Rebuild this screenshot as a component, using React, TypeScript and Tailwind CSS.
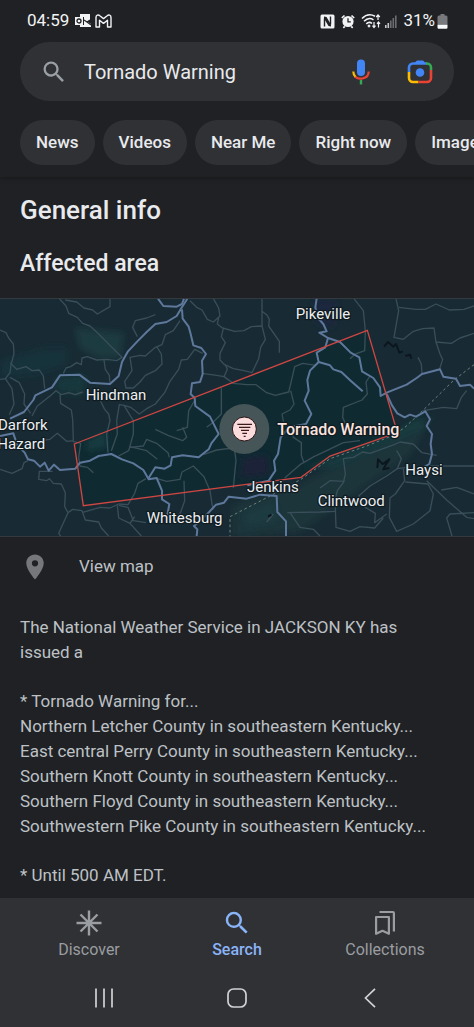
import { MdLocationOn, MdSearch } from 'react-icons/md'

const chips = ['News', 'Videos', 'Near Me', 'Right now', 'Images']

const counties = [
  'Northern Letcher County in southeastern Kentucky...',
  'East central Perry County in southeastern Kentucky...',
  'Southern Knott County in southeastern Kentucky...',
  'Southern Floyd County in southeastern Kentucky...',
  'Southwestern Pike County in southeastern Kentucky...',
]

const places = [
  { name: 'Pikeville', x: 887, y: 75 },
  { name: 'Hindman', x: 257, y: 319 },
  { name: 'Darfork', x: -6, y: 407 },
  { name: 'Hazard', x: -8, y: 466 },
  { name: 'Jenkins', x: 741, y: 595 },
  { name: 'Whitesburg', x: 440, y: 688 },
  { name: 'Clintwood', x: 953, y: 635 },
  { name: 'Haysi', x: 1216, y: 542 },
]

const minorRoads = [
  'M178 14 198 36 206 58 232 70 248 88 270 96 300 124 340 164 366 190 350 200 320 196 290 198 262 188 246 192 244 212 230 206 212 218 198 222 190 238',
  'M196 18 230 24 252 42 278 48 292 60 330 38V14',
  'M0 108 18 116 26 132 40 150 42 178 34 210 50 226 78 218 96 230 118 228 130 246 134 284',
  'M34 204 30 236 16 254 0 256M16 254 36 284 42 330 28 362',
  'M30 250 58 266 74 300 72 330 92 358',
  'M312 198 316 226 328 244 330 270M300 318 314 346 326 360 330 380 320 420 324 476',
  'M466 62 440 72 406 80 398 100 412 128',
  'M540 80 520 110 496 122 486 152 466 160 436 186 420 184 390 190 396 230 374 262 378 282 400 282 420 264 436 244 466 230 486 210 484 180 470 158',
  'M608 178 584 166 562 196 544 198 536 226 510 262 494 296 466 330 440 344 418 360 392 340 372 334 358 332 350 380 352 420 334 470',
  'M372 334 400 380 400 420 386 470 356 486',
  'M96 366 112 336 150 306 168 290 184 302 206 296 226 302 248 294M180 302 182 328 214 348 218 376',
  'M218 376 220 440 200 442 172 418 150 436 122 440M218 442 242 448 236 490 240 516 262 520 280 536',
  'M0 526 36 538 66 524 72 506 84 500M158 532 118 532 116 556 140 560 148 554 160 568 184 570 196 596 194 638 204 656 176 718 182 726',
  'M204 656 218 646 246 650 256 678 296 684 304 702 326 726M246 656 300 640 330 642 356 630 384 632 404 598 414 568 438 554',
  'M352 634 356 672 390 688 424 726M356 634 384 640 400 680 438 686M390 688 404 668',
  'M570 20 590 40 606 48 622 76 640 84 660 66 656 42 640 14M656 70 652 90 670 104 664 128 676 146 660 178 660 198 674 212 700 224 732 230 756 236 776 194 782 160 796 136 786 96 754 98 732 110 704 112 668 102',
  'M786 14 786 96M784 50 800 62 808 76 806 96 838 142 838 176',
  'M606 238 650 244 672 248 682 226 676 212M672 248 700 268 740 272 768 272 800 296 826 304 866 294 872 270 884 218 908 208 948 214',
  'M872 290 882 330 870 348 846 360 852 392 874 402 880 430 904 446 904 484 912 506',
  'M664 282V360L636 388 620 400M586 316 566 350 562 400 530 410',
  'M548 400 560 430 548 440 504 424 466 406M390 460 430 456 440 436 470 448 504 476 508 490',
  'M390 458 440 470 472 496M700 462 650 468 610 482M704 470 708 500 702 560 700 582',
  'M472 554 500 562 540 556 546 534 580 516 612 548 630 590 636 630 640 646M552 560 554 620 540 660 510 690',
  'M1062 14 1090 50 1096 110 1094 170 1066 180 1050 194M1110 246 1098 264 1102 300 1086 318 1030 340 1028 370 1040 398',
  'M1188 14 1196 50 1190 84 1182 130 1210 136 1240 112 1268 104 1302 102 1308 144 1354 148 1380 132 1422 118',
  'M1196 40 1248 46 1276 46 1308 30 1348 48 1392 46 1422 36M1308 144 1320 180 1328 196 1318 228',
  'M1254 190 1264 210 1266 240M1270 350 1330 340 1370 344 1384 310 1400 290',
  'M1182 452 1200 444 1240 450 1266 476 1310 484M1182 452 1160 460 1110 478 1088 474 1060 490 1030 494 1036 540 1030 566 1012 590 1006 616',
  'M854 552 900 512 942 488 980 470 1030 446 1080 440',
  'M960 582 990 560 1034 562M1190 470 1204 494 1192 524 1220 520 1240 530 1290 534 1300 516M1290 516 1422 516',
  'M1192 524 1160 546 1110 576 1076 606 1096 640 1126 658 1124 686 1160 660M1006 640 1008 700 1050 712 1080 698 1124 702 1150 672',
  'M1210 524 1214 560 1186 600 1170 612 1168 670 1190 712 1240 690 1290 650 1300 600 1284 570 1216 564',
  'M1280 560 1340 618 1400 670 1422 674M1324 588 1370 580 1422 600M1422 656 1350 660 1340 672 1356 726',
  'M862 656 960 654 1006 652M870 656 900 700 940 706 960 726M820 660 800 684',
]

const highways = [
  'M30 374 72 354 100 318 106 304 156 280 180 244 238 242 270 266 330 270 356 246 366 204 384 172 412 142 440 114 466 90 500 84 530 66 542 46 562 14',
  'M474 14 490 36 530 38 546 30 552 14',
  'M546 46 548 74 566 98 572 120 580 154 604 162 618 180 606 200 608 240 600 264 576 268 572 300 584 312 586 336 630 368 656 420 634 448 626 466 596 490 548 484 516 490 512 514 494 524 466 520 446 552',
  'M950 14 946 40 954 72 970 90 980 112 958 116 984 132 976 160 950 176 956 204 930 230 922 258 926 290 914 320 934 360 918 390 866 400 842 430 834 480 822 500 826 530 806 560 742 574',
  'M984 132 1020 144 1052 176 1078 190 1086 232 1120 252 1140 280 1142 306 1160 296 1220 272 1250 252 1266 240 1320 226 1330 248 1368 254 1380 276 1410 272 1422 284',
  'M956 204 990 214 1000 226 1024 234 1052 260 1088 292',
  'M1160 300 1176 334 1192 358 1214 370 1230 362 1248 368 1276 352 1290 376 1280 396 1296 420 1292 450 1296 480 1288 510 1270 520',
  'M0 426 40 418 52 454 74 476 84 496 102 500 120 518 134 506 146 530 162 512 180 528 226 524 240 506 270 500 296 486 334 480 366 496 400 508 430 528 446 556 470 552 486 590 486 616 508 630 502 664 510 676',
  'M590 726 592 706 582 696 620 662 648 632 672 626 686 608 740 614 780 602 830 606 832 654 858 682V726',
]

const warningArea = 'M223 450 1102 109 1192 416 1100 448 990 486 903 550 250 635z'

function StatusBar() {
  return (
    <div className="flex h-[42px] items-center justify-between pr-[26px] pl-[27px] text-[17px] text-[#f1f3f4]">
      <div className="flex items-center">
        <span>04:59</span>
        <svg className="ml-1.5 h-4 w-4" viewBox="0 0 16 16" aria-label="Outlook">
          <path fill="#f1f3f4" d="M5 1h10v6l-3 1.5L16 11v3H5v-2h4V4H5z" />
          <rect x="0" y="4" width="8" height="8" fill="#f1f3f4" />
          <circle cx="4" cy="8" r="2" fill="none" stroke="#202124" strokeWidth="1.3" />
          <path d="m9 7 3 2 4-2.500M12 9l4 3" fill="none" stroke="#202124" strokeWidth="1.1" />
        </svg>
        <svg className="ml-1 h-4 w-[17px]" viewBox="0 0 17 16" fill="none" aria-label="Gmail">
          <path
            d="M1 4.500C1 2 3.400 1.500 4.800 2.700L8.500 5.600l3.700-2.900C13.600 1.500 16 2 16 4.500V14h-3.500V7.300L8.500 10.400 4.500 7.300V14H1z"
            stroke="#f1f3f4"
            strokeWidth="1.4"
            strokeLinejoin="round"
          />
        </svg>
      </div>
      <div className="flex items-center">
        <svg className="h-[15px] w-[15px]" viewBox="0 0 15 15" aria-label="NFC">
          <rect x=".5" y=".5" width="14" height="14" rx="1.500" fill="#f1f3f4" />
          <path d="M4.500 12.500V4.500M10.500 2.500v8" fill="none" stroke="#202124" strokeWidth="1.400" />
          <path d="M4 2.500 6.500 3l4.500 7.500v2L8.500 12 4 4.500z" fill="#202124" />
        </svg>
        <svg className="ml-1.5 h-[15px] w-[14px]" viewBox="0 0 14 15" aria-label="Alarm">
          <circle cx="7" cy="7.500" r="5.600" fill="#f1f3f4" />
          <path d="m.8 4 2.700-2.500M13.200 4l-2.700-2.500M2.300 13.800l1.500-1.500M11.700 13.800l-1.500-1.500" stroke="#f1f3f4" strokeWidth="1.700" />
          <path d="M7 4.200v3.600h2.800" fill="none" stroke="#202124" strokeWidth="1.300" />
        </svg>
        <svg className="ml-1.5 h-4 w-5" viewBox="0 0 20 16" fill="none" stroke="#f1f3f4" aria-label="Wi-Fi">
          <path d="M1 5.500C5 1.500 10 1 14 3.300M3 8.300c3-3 6.800-3.300 9.500-1.500M5.300 10.800c1.800-1.600 4.200-1.600 5.700-.3" strokeWidth="1.600" />
          <circle cx="8" cy="13" r="1" fill="#f1f3f4" />
          <path d="M17 7V2M15.200 4 17 2l1.800 2M17.500 14.500V9M16 10.800l1.500-1.800 1.500 1.800M13 9v5.500M11.500 12.700l1.500 1.800 1.500-1.800" strokeWidth="1.200" />
        </svg>
        <svg className="ml-1 h-[13px] w-3" viewBox="0 0 12 13" aria-label="Signal">
          <path d="M0 10h1.600v3H0zM2.500 8h1.600v5H2.500z" fill="#c4c7c9" />
          <path d="M5 5.500h1.600V13H5zM7.500 3h1.600v10H7.500zM10 .500h1.600V13H10z" fill="#6b6d70" />
        </svg>
        <span className="ml-1.5">31%</span>
        <svg className="ml-0.5 h-[15px] w-[11px]" viewBox="0 0 11 15" aria-label="Battery">
          <path d="M3.500 0h4v1.500H9a1.500 1.500 0 0 1 1.500 1.500v7h-10V3A1.500 1.500 0 0 1 2 1.500h1.500z" fill="#77797c" />
          <path d="M.5 10.500h10v3A1.200 1.200 0 0 1 9.300 14.700H1.700A1.200 1.200 0 0 1 .5 13.500z" fill="#f8f9fa" />
        </svg>
      </div>
    </div>
  )
}

function MicIcon() {
  return (
    <svg className="h-[26px] w-[18px]" viewBox="0 0 18 26" fill="none">
      <rect x="5" y="0.500" width="8" height="16.500" rx="4" fill="#4285f4" />
      <path d="M1.300 12.500c0 2.500.9 4.300 2.400 5.600" stroke="#fbbc04" strokeWidth="2.200" />
      <path d="M3.400 17.900c3.400 3.200 13.300 2.200 13.300-5.400" stroke="#ea4335" strokeWidth="2.200" />
      <path d="M9 21v4.500" stroke="#34a853" strokeWidth="2.400" />
    </svg>
  )
}

function LensIcon() {
  return (
    <svg className="h-[26px] w-[26px]" viewBox="0 0 26 26" fill="none" strokeWidth="2.600">
      <path d="M2 13V8.500a4 4 0 0 1 4-4h14" stroke="#4285f4" />
      <path d="M7 4.500C8.500 4.500 8.500 1.500 10.500 1.500h5c2 0 2 3 3.500 3z" fill="#4285f4" />
      <path d="M19 4.500h1a4 4 0 0 1 4 4v2.500" stroke="#34a853" />
      <path d="M2 13v6a4 4 0 0 0 4 4h5.500" stroke="#fbbc04" />
      <path d="M11.500 23H20a4 4 0 0 0 4-4v-8" stroke="#ea4335" />
      <circle cx="13" cy="13.500" r="4.300" fill="#4285f4" />
    </svg>
  )
}

function AreaMap() {
  return (
    <svg
      className="block w-full bg-[#182b34]"
      viewBox="0 12 1422 717"
      role="img"
      aria-label="Map of the affected area"
    >
      <defs>
        <filter id="soft" x="-30%" y="-30%" width="160%" height="160%">
          <feGaussianBlur stdDeviation="10" />
        </filter>
      </defs>

      {/* Terrain */}
      <g filter="url(#soft)">
        <path d="M225 102 370 117 360 192 300 192 240 162z" fill="#1d3b40" />
        <path d="M130 162 200 162 200 212 110 242 0 252 0 202z" fill="#19333a" />
        <path d="M700 632 900 572 1150 442 1300 362 1230 482 900 712 700 729z" fill="#1a343a" />
        <path d="M170 252 260 242 250 302 170 292z" fill="#18373d" />
        <path d="M940 20 1010 20 1000 100 950 90z" fill="#1b2840" />
      </g>
      <path d={warningArea} fill="#0f2a31" />
      <g filter="url(#soft)">
        <path d="M260 440 320 412 320 462 260 472z" fill="#173a3f" />
        <path d="M730 492 800 482 810 542 720 552z" fill="#1a2138" />
        <path d="M910 520 1000 494 1160 430 1260 370 1270 400 1000 520z" fill="#193c40" />
        <path d="M730 660 820 620 830 680 740 700z" fill="#1a3a3f" />
      </g>

      <g fill="none" stroke="#394e59" strokeWidth="4" strokeLinejoin="round">
        {minorRoads.map((d) => (
          <path key={d} d={d} />
        ))}
      </g>

      {/* State line */}
      <path
        d="M1422 212 1362 258 1270 348 1215 400 1180 424 1100 456 990 494 903 556 810 606 690 668V729"
        fill="none"
        stroke="#6d807c"
        strokeWidth="3"
        strokeDasharray="8 8"
      />

      {/* Lakes */}
      <path
        d="M1152 158 1164 144 1180 158 1188 150 1198 176 1208 172M1216 186 1230 182 1234 194M1132 522 1134 496 1148 510 1168 496 1156 514 1150 526 1168 522M804 668 814 662"
        fill="none"
        stroke="#0b161e"
        strokeWidth="6"
        strokeLinejoin="round"
      />

      <g fill="none" stroke="#5e789c" strokeWidth="6" strokeLinejoin="round">
        {highways.map((d) => (
          <path key={d} d={d} />
        ))}
      </g>

      <path d={warningArea} fill="none" stroke="#cf4642" strokeWidth="4" />

      {/* Tornado marker */}
      <circle cx="733" cy="405" r="75" fill="#4b595a" fillOpacity=".92" />
      <circle cx="733" cy="405" r="36" fill="#fadcdc" stroke="#2b1414" strokeWidth="3" />
      <path d="M712 391h44M717 400h34M723 409h24M727 418h14M731 427h6" stroke="#3c1a18" strokeWidth="4" />

      <g
        fontSize="45"
        fill="#eceff1"
        stroke="#101c22"
        strokeWidth="8"
        strokeLinejoin="round"
        paintOrder="stroke"
      >
        {places.map((place) => (
          <text key={place.name} x={place.x} y={place.y}>
            {place.name}
          </text>
        ))}
        <text x="832" y="423" fontSize="48" fontWeight="500" fill="#fbe3df">
          Tornado Warning
        </text>
      </g>

      <path d="M0 13H1422M0 728H1422" stroke="#3a3d42" strokeWidth="3" />
    </svg>
  )
}

function BottomNav() {
  return (
    <footer className="shrink-0 bg-[#303134]">
      <nav className="grid grid-cols-3 px-[15px] pt-3 text-base leading-5 text-[#9a9da1]">
        <button className="flex flex-col items-center gap-1">
          <svg className="h-[26px] w-[26px]" viewBox="0 0 26 26" stroke="currentColor" strokeWidth="2.400">
            <path d="M13 .5v25M.5 13h25M4.500 4.500l17 17M21.500 4.500l-17 17" />
          </svg>
          Discover
        </button>
        <button className="flex flex-col items-center gap-1 font-medium text-[#8ab4f8]">
          <MdSearch className="-my-0.5 h-[30px] w-[30px]" />
          Search
        </button>
        <button className="flex flex-col items-center gap-1">
          <svg className="h-[26px] w-[22px]" viewBox="0 0 22 26" fill="none" stroke="currentColor" strokeWidth="2.200">
            <path d="M2.100 7h12.800v16.800l-6.400-3-6.400 3z" strokeLinejoin="round" />
            <path d="M5.500 2h13.400q1 0 1 1v18.500" />
          </svg>
          Collections
        </button>
      </nav>
      <div className="grid h-[67px] grid-cols-3 items-center px-[37px] pt-[9px] text-[#d0d2d4]">
        <button className="flex justify-center" aria-label="Recent apps">
          <svg className="h-5 w-5" viewBox="0 0 20 20" stroke="currentColor" strokeWidth="1.700">
            <path d="M2 .5v19M10 .5v19M18 .5v19" />
          </svg>
        </button>
        <button className="flex justify-center" aria-label="Home">
          <svg className="h-5 w-5" viewBox="0 0 20 20" fill="none" stroke="currentColor" strokeWidth="1.700">
            <rect x="1" y="1" width="18" height="18" rx="5.500" />
          </svg>
        </button>
        <button className="flex justify-center" aria-label="Back">
          <svg className="h-5 w-3" viewBox="0 0 12 20" fill="none" stroke="currentColor" strokeWidth="1.700">
            <path d="M11 .8 1.500 10 11 19.200" />
          </svg>
        </button>
      </div>
    </footer>
  )
}

export default function App() {
  return (
    <div className="flex h-screen flex-col overflow-hidden bg-[#202124] font-['Roboto',sans-serif] text-[#e8eaed]">
      {/* Header */}
      <header className="shrink-0 pb-3 shadow-[0_1px_4px_#17181a]">
        <StatusBar />
        <form className="mx-5 flex h-[59px] items-center rounded-full bg-[#303134] pr-[21px] pl-5">
          <MdSearch className="h-7 w-7 shrink-0 text-[#9aa0a6]" />
          <input
            className="ml-4 min-w-0 flex-1 bg-transparent text-xl text-[#e8eaed] outline-none"
            aria-label="Search"
            defaultValue="Tornado Warning"
          />
          <button type="button" aria-label="Voice search">
            <MicIcon />
          </button>
          <button type="button" className="ml-[37px]" aria-label="Search with your camera">
            <LensIcon />
          </button>
        </form>
        <div className="mt-[19px] flex gap-2 overflow-hidden pl-5">
          {chips.map((chip) => (
            <button
              key={chip}
              className="h-[45px] shrink-0 rounded-full bg-[#303134] px-4 text-[17px] font-medium whitespace-nowrap"
            >
              {chip}
            </button>
          ))}
        </div>
      </header>

      <main className="min-h-0 flex-1 overflow-hidden">
        <h1 className="px-5 pt-[17px] text-[26px] leading-8 font-medium">General info</h1>
        <h2 className="px-5 pt-[22px] pb-[18px] text-[23px] leading-8 font-medium">Affected area</h2>
        <AreaMap />
        <a href="#map" className="flex h-[59px] items-center px-5 text-[17px] text-[#bdc1c6]">
          <MdLocationOn className="h-[30px] w-[30px] text-[#75777a]" />
          <span className="ml-[29px]">View map</span>
        </a>
        <div className="pt-[19px] pr-9 pl-5 text-[17px] leading-[25px] text-[#bdc1c6]">
          <p>The National Weather Service in JACKSON KY has issued a</p>
          <p className="pt-6">* Tornado Warning for...</p>
          {counties.map((county) => (
            <p key={county}>{county}</p>
          ))}
          <p className="pt-6">* Until 500 AM EDT.</p>
        </div>
      </main>

      <BottomNav />
    </div>
  )
}
